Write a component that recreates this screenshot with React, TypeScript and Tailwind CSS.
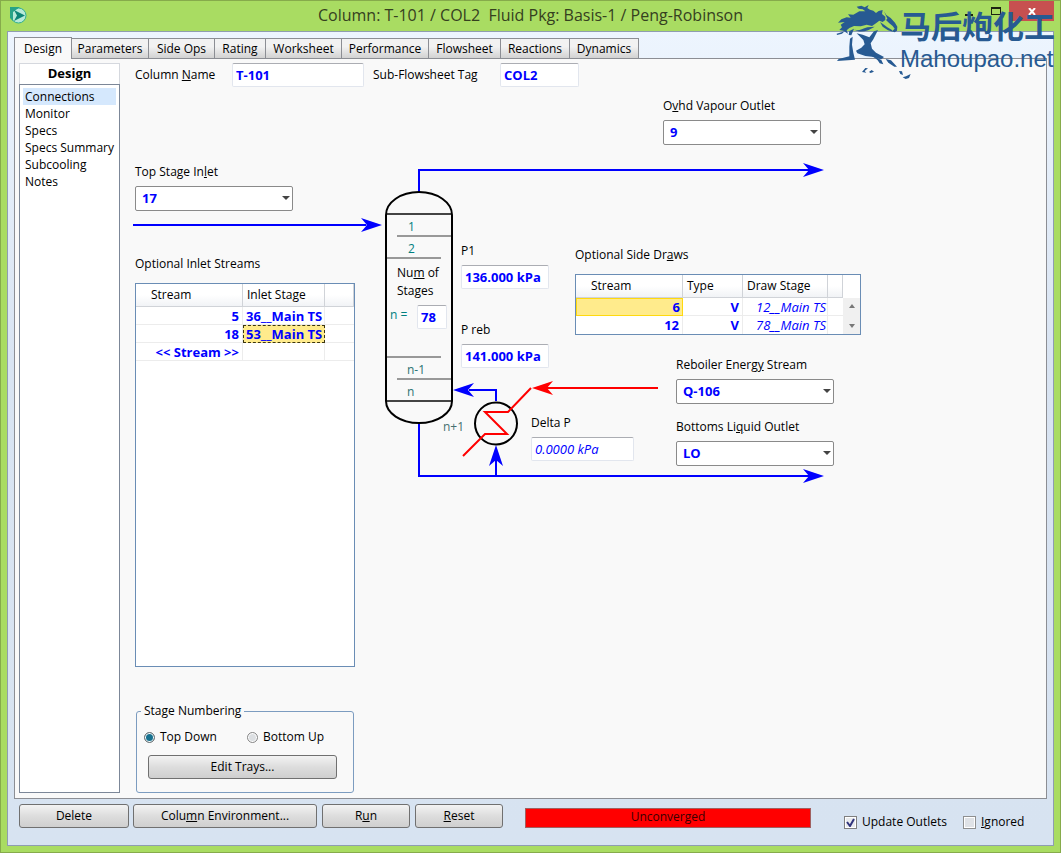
import React from "react";
import clsx from "clsx";

const TABS = [
  { name: "Parameters", width: "w-[78px]" },
  { name: "Side Ops", width: "w-[67px]" },
  { name: "Rating", width: "w-[52px]" },
  { name: "Worksheet", width: "w-[77px]" },
  { name: "Performance", width: "w-[88px]" },
  { name: "Flowsheet", width: "w-[73px]" },
  { name: "Reactions", width: "w-[70px]" },
  { name: "Dynamics", width: "w-[70px]" },
];

const PAGES = ["Connections", "Monitor", "Specs", "Specs Summary", "Subcooling", "Notes"];

const BUTTON =
  "h-6 rounded-[3px] border border-[#707070] bg-linear-to-b from-[#f3f3f3] from-0% via-[#dddddd] via-50% to-[#cfcfcf] text-center";

const HEAD =
  "border-r border-b border-[#d0d3d8] bg-linear-to-b from-white from-50% to-[#f1f3f6] text-left font-normal";

type FieldProps = {
  id: string;
  value: string;
  className?: string;
};

const TextField = ({ id, value, className }: FieldProps) => (
  <input
    id={id}
    defaultValue={value}
    className={clsx(
      "h-6 rounded-[2px] border border-[#e2e6ee] border-t-[#abadb3] bg-white px-[3px] text-[13px] text-[#0000ff]",
      className
    )}
  />
);

const Dropdown = ({ id, value, className }: FieldProps) => (
  <div className={clsx("relative w-[158px]", className)}>
    <select
      id={id}
      defaultValue={value}
      className="block h-[25px] w-full appearance-none rounded-[2px] border border-[#8a8a8a] bg-white pb-px pl-[6px] text-[13px] font-bold text-[#0000ff]"
    >
      <option>{value}</option>
    </select>
    <svg className="pointer-events-none absolute right-[3px] top-[10px]" width="8" height="4">
      <path d="M0 0h8L4 4z" fill="#444" />
    </svg>
  </div>
);

const Horse = () => (
  <svg width="84" height="84" viewBox="0 0 252 252" fill="#275a92">
    <path d="M18 68L28 58L44 52L56 53L48 43L64 44L82 34L100 34L92 28L80 26L74 20L88 17L98 22L110 15L106 24L114 29L124 32L132 39L140 33L152 30L150 42L160 50L160 60L152 66L142 62L132 70L120 78L104 74L86 79L66 78L52 84L44 91L48 101L34 92L22 90L30 82L26 74L38 66Z" />
    <path d="M156 34L163 45L176 54L189 68L196 80L195 92L188 97L180 94L188 86L182 78L172 70L162 60L166 56Z" />
    <path d="M144 66L156 74L166 82L180 90L182 95L168 91L152 80Z" />
    <path d="M66 88C79 95 88 87 106 82L128 80C110 92 84 102 66 88Z" />
    <path d="M74 100L92 104L112 112L126 94L138 90L124 118L116 130L120 146L132 158L156 171L148 178L120 170L100 168L76 160L72 152L88 143L98 133L94 120Z" />
    <path d="M52 93L66 86L58 106L50 105ZM54 116L62 110L60 134L64 158L69 179L15 183L20 177L52 169L52 140ZM14 101L38 94L30 101L15 105Z" />
    <path d="M119 166L148 180L154 193L143 190L137 181ZM161 177L177 181L195 200L187 200L169 188ZM90 216L100 204L108 205L98 213L103 218ZM111 216L119 210L126 215L116 219ZM201 213L210 214L213 225L205 222ZM212 232L222 229L236 222L231 234L221 237Z" />
  </svg>
);

const TitleBar = () => (
  <header className="flex h-[30px] shrink-0 items-center text-[#35401f]">
    <svg className="-mt-[2px] ml-[9px]" width="17" height="17" viewBox="0 0 17 17">
      <circle cx="8.500" cy="8.500" r="7.500" fill="#b8ead8" stroke="#2fae93" />
      <path d="M0 0h10L3 5v9L0 11z" fill="#27a387" />
      <path d="M4 3l11 5.500L4 14l3-5.500z" fill="#0d8577" />
    </svg>
    <h1 className="flex-1 pb-[2px] pl-[79px] text-center text-[16px] whitespace-pre">
      Column: T-101 / COL2  Fluid Pkg: Basis-1 / Peng-Robinson
    </h1>
    <div className="flex items-start self-start">
      <button aria-label="Minimize" className="h-5 w-7">
        <span className="mx-auto mt-2 block h-[2px] w-2 bg-[#1d2412]" />
      </button>
      <button aria-label="Maximize" className="h-5 w-[26px]">
        <span className="mx-auto block h-2 w-[10px] border border-t-2 border-[#1d2412]" />
      </button>
      <button aria-label="Close" className="mr-[6px] h-5 w-[45px] bg-[#c75050]">
        <svg className="mx-auto" width="8" height="7" viewBox="0 0 8 7">
          <path d="M1 0l6 7M7 0L1 7" stroke="#fff" strokeWidth="2" />
        </svg>
      </button>
    </div>
  </header>
);

const Sidebar = () => (
  <nav className="flex w-[101px] shrink-0 flex-col">
    <h2 className="h-[21px] border border-b-0 border-[#d5d8de] bg-white text-center text-[13px] leading-[18px] font-bold">
      Design
    </h2>
    <ul className="flex-1 border border-[#7c8798] bg-white px-[3px] pt-[3px]">
      {PAGES.map((page, i) => (
        <li key={page} className={clsx("h-[17px] pl-[2px] leading-[17px] whitespace-nowrap", i === 0 && "bg-[#d5e8fd]")}>
          <a href="#design">{page}</a>
        </li>
      ))}
    </ul>
  </nav>
);

const InletStreams = () => (
  <div className="mt-[9px] flex-1 border border-[#6a8db5] bg-white">
    <table className="w-full table-fixed border-separate border-spacing-0 text-[#0000ff]">
      <colgroup>
        <col className="w-[107px]" />
        <col className="w-[82px]" />
        <col />
      </colgroup>
      <thead className="text-black">
        <tr className="h-[23px]">
          <th className={clsx(HEAD, "pl-[15px]")}>Stream</th>
          <th className={clsx(HEAD, "pl-1")}>Inlet Stage</th>
          <th className={HEAD} />
        </tr>
      </thead>
      <tbody className="text-[13px] leading-4 font-bold whitespace-nowrap">
        <tr className="h-[18px]">
          <td className="border-r border-b border-[#ececec] pr-[3px] text-right">5</td>
          <td className="border-r border-b border-[#ececec] pl-[3px]">36__Main TS</td>
          <td className="border-b border-[#ececec]" />
        </tr>
        <tr className="h-[18px]">
          <td className="border-r border-b border-[#ececec] pr-[3px] text-right">18</td>
          <td className="border border-dashed border-[#3b3510] bg-[#ffeb8c] pl-[2px]">53__Main TS</td>
          <td className="border-b border-[#ececec]" />
        </tr>
        <tr className="h-[18px]">
          <td className="border-r border-b border-[#ececec] pr-[3px] text-right">&lt;&lt; Stream &gt;&gt;</td>
          <td className="border-r border-b border-[#ececec]" />
          <td className="border-b border-[#ececec]" />
        </tr>
      </tbody>
    </table>
  </div>
);

const SideDraws = () => (
  <div className="mt-[9px] flex h-[61px] w-[286px] border border-[#6a8db5] bg-white">
    <table className="w-[267px] table-fixed border-separate border-spacing-0 text-[#0000ff]">
      <colgroup>
        <col className="w-[107px]" />
        <col className="w-[60px]" />
        <col className="w-[85px]" />
        <col />
      </colgroup>
      <thead className="text-black">
        <tr className="h-[23px]">
          <th className={clsx(HEAD, "pl-[15px]")}>Stream</th>
          <th className={clsx(HEAD, "pl-1")}>Type</th>
          <th className={clsx(HEAD, "pl-1 whitespace-nowrap")}>Draw Stage</th>
          <th className={HEAD} />
        </tr>
      </thead>
      <tbody className="text-right text-[13px] leading-4 whitespace-nowrap">
        <tr className="h-[18px]">
          <td className="border border-[#ffd90f] bg-[#ffeb8c] pr-[2px] font-bold">6</td>
          <td className="border-r border-b border-[#ececec] pr-[3px] font-bold">V</td>
          <td className="border-r border-b border-[#ececec] pr-[1px] italic">12__Main TS</td>
          <td className="border-b border-[#ececec]" />
        </tr>
        <tr className="h-[18px]">
          <td className="border-r border-[#ececec] pr-[3px] font-bold">12</td>
          <td className="border-r border-[#ececec] pr-[3px] font-bold">V</td>
          <td className="border-r border-[#ececec] pr-[1px] italic">78__Main TS</td>
          <td />
        </tr>
      </tbody>
    </table>
    <div className="mt-[23px] flex flex-1 flex-col items-center justify-between bg-[#f0f0f0] py-[6px]">
      <svg width="6" height="4">
        <path d="M3 0l3 4H0z" fill="#777" />
      </svg>
      <svg width="6" height="4">
        <path d="M3 4l3-4H0z" fill="#777" />
      </svg>
    </div>
  </div>
);

// column vessel, reboiler and the fields pinned on them
const ColumnDiagram = () => (
  <div className="relative w-[190px] shrink-0">
    <svg className="absolute top-0 left-0" width="440" height="400" fill="none">
      <g stroke="#0000ff" strokeWidth="2">
        <path d="M34 105V83H424M34 337V389H424M111 389V372M111 314V303H84" />
      </g>
      <g fill="#0000ff">
        <path d="M439 83l-21-7 6 7-6 7zM439 389l-21-7 6 7-6 7zM68 303l21-7-6 7 6 7zM111 358l-7 21 7-6 7 6z" />
      </g>
      <path d="M12 149H66M1 171H56M1 270H56M12 292H66" stroke="#999" strokeWidth="2" />
      <path d="M1 127H67M1 314H67" stroke="#444" strokeWidth="2" />
      <path d="M1 128A33 23 0 0 1 67 128V314A33 22 0 0 1 1 314Z" stroke="#000" strokeWidth="2" />
      <circle cx="111" cy="336.500" r="21" stroke="#000" strokeWidth="2" />
      <path d="M78 369L100 347H122L100 325H123L146 301M160 301H273" stroke="#f00" strokeWidth="2" />
      <path d="M147 301l21-7-6 7 6 7z" fill="#f00" />
    </svg>
    <span className="absolute top-[130px] left-[23px] text-[#007f7f]">1</span>
    <span className="absolute top-[152px] left-[23px] text-[#007f7f]">2</span>
    <label htmlFor="stages" className="absolute top-[177px] left-3 leading-[18px] whitespace-nowrap">
      Nu<u>m</u> of
      <span className="block">Stages</span>
    </label>
    <span className="absolute top-[218px] left-[5px] text-[#007f7f]">n =</span>
    <TextField id="stages" value="78" className="absolute top-[218px] left-8 w-[30px] font-bold" />
    <span className="absolute top-[273px] left-[22px] text-[#2b7373]">n-1</span>
    <span className="absolute top-[295px] left-[22px] text-[#2b7373]">n</span>
    <span className="absolute top-[330px] left-[58px] text-[#457070]">n+1</span>
    <label htmlFor="p1" className="absolute top-[154px] left-[76px]">P1</label>
    <TextField id="p1" value="136.000 kPa" className="absolute top-[178px] left-[76px] w-[88px] font-bold" />
    <label htmlFor="preb" className="absolute top-[233px] left-[76px]">P reb</label>
    <TextField id="preb" value="141.000 kPa" className="absolute top-[257px] left-[76px] w-[88px] font-bold" />
    <label htmlFor="deltap" className="absolute top-[326px] left-[146px]">Delta P</label>
    <TextField id="deltap" value="0.0000 kPa" className="absolute top-[350px] left-[146px] w-[103px] italic" />
  </div>
);

const Connections = () => (
  <main className="ml-[15px] flex flex-1 flex-col">
    <div className="flex h-6 items-center">
      <label htmlFor="name" className="w-[97px]">Column <u>N</u>ame</label>
      <TextField id="name" value="T-101" className="w-[132px] font-bold" />
      <label htmlFor="tag" className="ml-[9px] w-[127px]">Sub-Flowsheet Tag</label>
      <TextField id="tag" value="COL2" className="w-[79px] font-bold" />
    </div>
    <div className="flex flex-1">
      <div className="mr-[30px] flex w-[220px] shrink-0 flex-col pt-[75px]">
        <label htmlFor="topinlet">Top Stage In<u>l</u>et</label>
        <Dropdown id="topinlet" value="17" className="mt-1" />
        <svg className="mt-[7px] ml-[-2px] h-[14px] w-[250px]" fill="#0000ff">
          <path d="M0 6h234v2H0zM249 7l-21-7 6 7-6 7z" />
        </svg>
        <p className="mt-[22px]">Optional Inlet Streams</p>
        <InletStreams />
        <fieldset className="mt-[34px] mr-px ml-px h-[92px] rounded-[3px] border border-[#7c9cc0] px-[7px]">
          <legend className="ml-[-3px] px-[3px]">Stage Numbering</legend>
          <div className="mt-[6px] flex h-5 items-center">
            <input id="down" type="radio" name="numbering" defaultChecked className="h-[11px] w-[11px] appearance-none rounded-full border border-[#777] bg-white checked:bg-[#17718f] checked:shadow-[inset_0_0_0_1px_white]" />
            <label htmlFor="down" className="ml-[5px] w-[87px]">Top Down</label>
            <input id="up" type="radio" name="numbering" className="h-[11px] w-[11px] appearance-none rounded-full border border-[#888] bg-[#dcdfe2] shadow-[inset_0_0_0_1px_white] checked:bg-[#17718f]" />
            <label htmlFor="up" className="ml-[5px]">Bottom Up</label>
          </div>
          <button className={clsx(BUTTON, "mt-2 ml-1 w-[189px]")}>Edit Trays...</button>
        </fieldset>
      </div>
      <ColumnDiagram />
      <div className="relative flex flex-1 flex-col pt-[9px]">
        <label htmlFor="ovhd" className="ml-[88px]">O<u>v</u>hd Vapour Outlet</label>
        <Dropdown id="ovhd" value="9" className="mt-1 ml-[88px]" />
        <p className="mt-[100px]">Optional Side Dr<u>a</u>ws</p>
        <SideDraws />
        <label htmlFor="reboiler" className="mt-5 ml-[101px]">Reboiler Energ<u>y</u> Stream</label>
        <Dropdown id="reboiler" value="Q-106" className="mt-1 ml-[101px]" />
        <label htmlFor="bottoms" className="mt-[13px] ml-[101px]">Bottoms Li<u>q</u>uid Outlet</label>
        <Dropdown id="bottoms" value="LO" className="mt-1 ml-[101px]" />
      </div>
    </div>
  </main>
);

const BottomBar = () => (
  <footer className="flex h-[46px] shrink-0 pt-[5px] pl-[11px]">
    <button className={clsx(BUTTON, "w-[110px]")}>Delete</button>
    <button className={clsx(BUTTON, "ml-1 w-[184px]")}>Colu<u>m</u>n Environment...</button>
    <button className={clsx(BUTTON, "ml-[5px] w-[88px]")}>R<u>u</u>n</button>
    <button className={clsx(BUTTON, "ml-[5px] w-[88px]")}><u>R</u>eset</button>
    <div role="status" className="mt-1 ml-[22px] h-5 w-[286px] border border-[#a06060] bg-[#ff0000] text-center leading-4 text-[#3a0000]">
      Unconverged
    </div>
    <div className="ml-[33px] flex h-9 items-center">
      <div className="relative flex">
        <input id="update" type="checkbox" defaultChecked className="peer h-[13px] w-[13px] appearance-none border border-[#7f7f7f] bg-[#e9ebee] shadow-[inset_0_0_0_1px_white]" />
        <svg className="pointer-events-none absolute top-[2px] left-[2px] hidden peer-checked:block" width="9" height="9" viewBox="0 0 9 9">
          <path d="M1 4l3 4 4-7" fill="none" stroke="#31347c" strokeWidth="2" />
        </svg>
      </div>
      <label htmlFor="update" className="ml-[5px] w-[101px]">Update Outlets</label>
      <input id="ignored" type="checkbox" className="h-[13px] w-[13px] appearance-none border border-[#8e8f8f] bg-[#dfe2e6] shadow-[inset_0_0_0_1px_white] checked:bg-[#31347c]" />
      <label htmlFor="ignored" className="ml-[5px]"><u>I</u>gnored</label>
    </div>
  </footer>
);

const App = () => {
  return (
    <div className="relative flex min-h-screen flex-col border border-[#86ab4b] bg-[#a9dc62] font-['Open_Sans','Noto_Sans',sans-serif] text-xs leading-5 text-black">
      <TitleBar />
      <div className="mx-[6px] mb-[6px] flex flex-1 flex-col border border-[#8f9db0] bg-linear-to-b from-[#edf5fe] from-0% via-[#d9e4f2] via-40% to-[#d7e3f1]">
        <div className="flex h-[26px] shrink-0 items-end pl-[6px]">
          <button className="z-10 -mb-px h-[22px] w-[58px] border border-b-0 border-[#8c8e94] bg-[#f9f9f9]">Design</button>
          {TABS.map((tab) => (
            <button
              key={tab.name}
              className={clsx(
                "-ml-px h-5 border border-b-0 border-[#8c8e94] bg-linear-to-b from-[#f2f2f2] from-40% to-[#d2d2d2] leading-5 whitespace-nowrap",
                tab.width
              )}
            >
              {tab.name}
            </button>
          ))}
        </div>
        <div className="mx-[6px] flex flex-1 border border-[#8c8e94] bg-[#f9f9f9] pt-1 pb-[5px] pl-1">
          <Sidebar />
          <Connections />
        </div>
        <BottomBar />
      </div>
      <div className="pointer-events-none absolute -top-px right-[5px] z-20 flex text-[#275a92]">
        <Horse />
        <div className="-ml-4 pt-[5px]">
          <p className="font-['Noto_Sans_CJK_SC',sans-serif] text-[31px] leading-10 font-bold whitespace-nowrap">马后炮化工</p>
          <p className="font-['Liberation_Sans',sans-serif] text-2xl leading-7">Mahoupao.net</p>
        </div>
      </div>
    </div>
  );
};

export default App;
